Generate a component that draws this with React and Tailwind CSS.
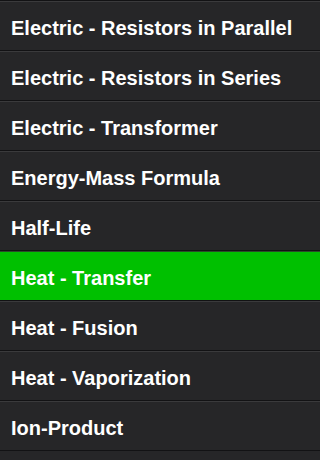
const items = [
  'Electric - Resistors in Parallel',
  'Electric - Resistors in Series',
  'Electric - Transformer',
  'Energy-Mass Formula',
  'Half-Life',
  'Heat - Transfer',
  'Heat - Fusion',
  'Heat - Vaporization',
  'Ion-Product',
]

export default function App() {
  return (
    <div className="w-[320px] h-[460px] overflow-hidden bg-[#262628] font-['Liberation_Sans',Arial,sans-serif]">
      <div className="h-px bg-[#121214]" />
      {items.map((name, i) => (
        <div
          key={name}
          className={`h-[50px] flex items-center pl-[11px] pt-[3px] border-t border-b text-[20px] font-bold text-white ${i === 5 ? 'bg-[#00c000] border-t-[#2a4a2a] border-b-[#121214]' : 'bg-[#262628] border-t-[#3a3a3c] border-b-[#121214]'}`}
        >
          {name}
        </div>
      ))}
    </div>
  )
}
